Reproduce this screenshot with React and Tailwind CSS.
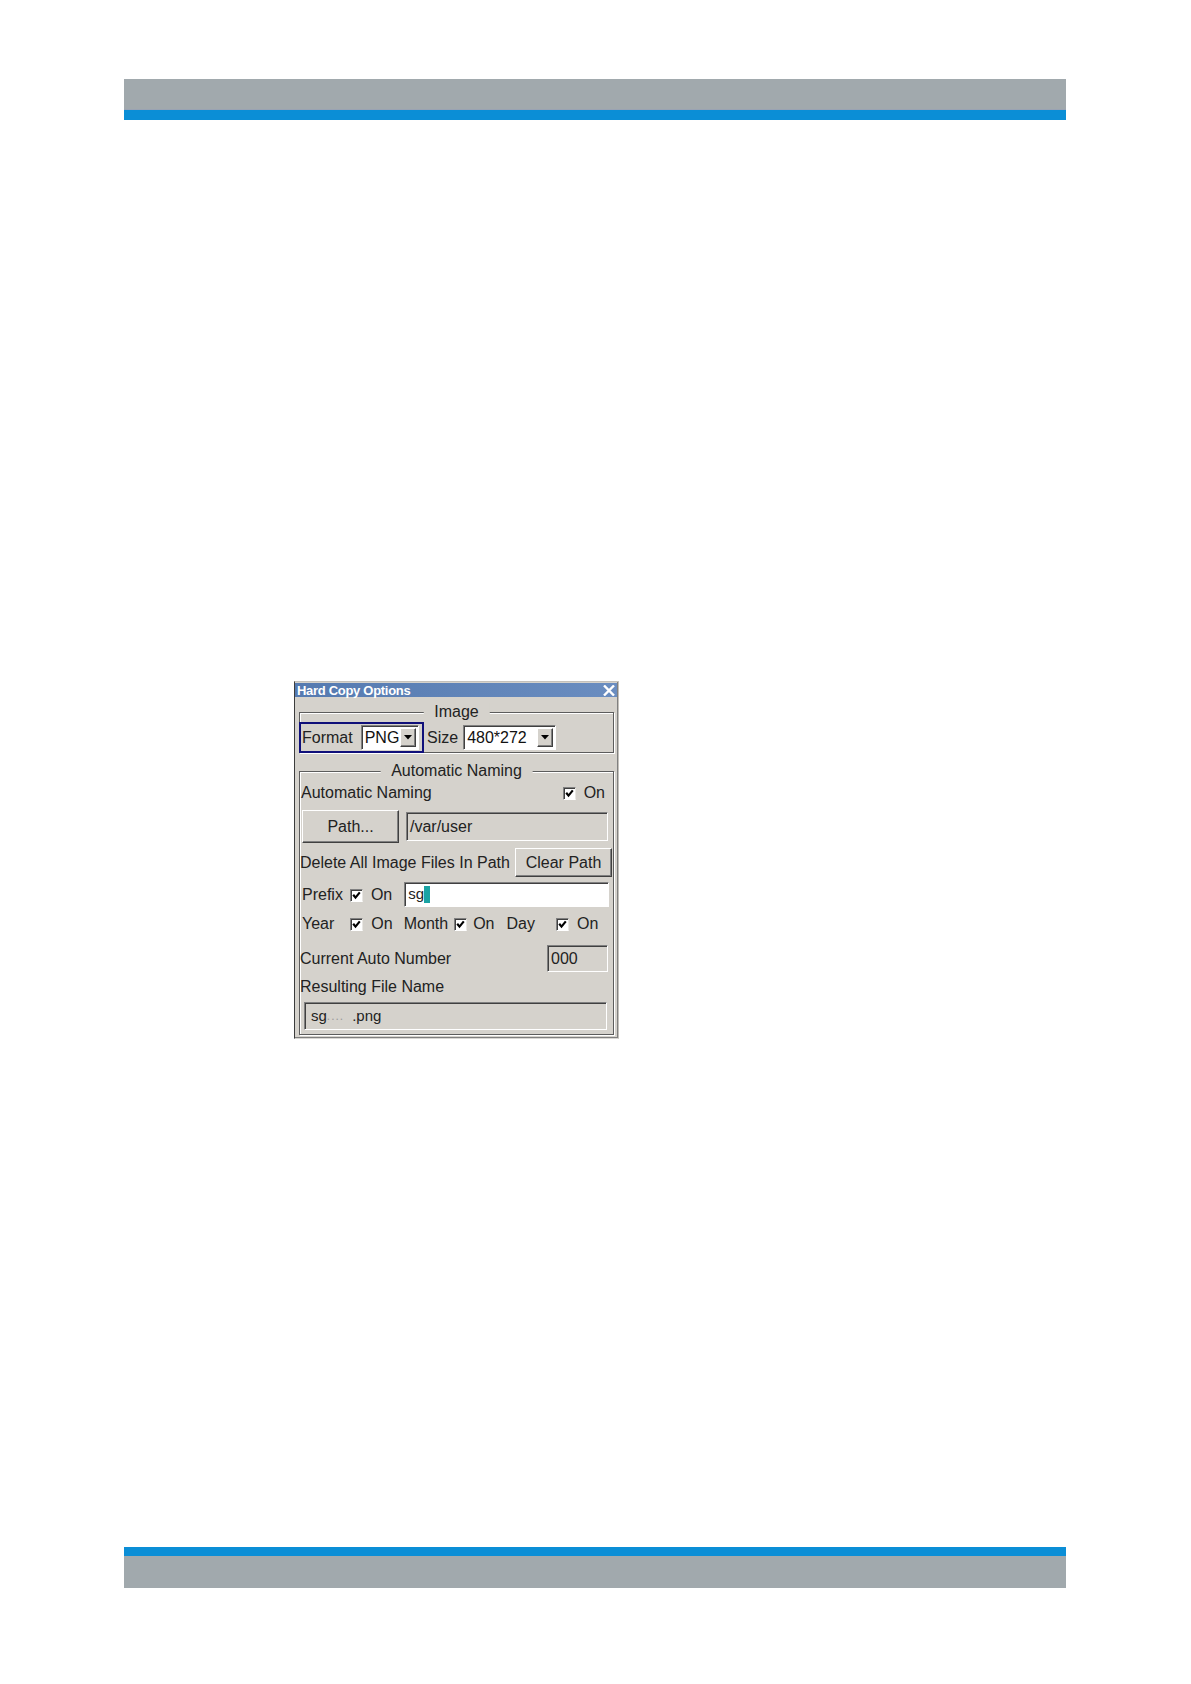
import React from "react";

const font = { fontFamily: '"Liberation Sans", Arial, sans-serif' };

function Checkbox() {
  return (
    <span className="inline-flex items-center justify-center w-[13px] h-[13px] bg-white border border-t-[#808080] border-l-[#808080] border-b-white border-r-[#e8e6e2] shadow-[inset_1px_1px_0_#404040]">
      <svg width="9" height="9" viewBox="0 0 9 9">
        <polyline points="1.2,3.8 3.5,6.6 7.8,1.4" fill="none" stroke="#000" strokeWidth="2.2" />
      </svg>
    </span>
  );
}

function Combo({ value, width }) {
  return (
    <div
      className={`flex items-center h-[25px] ${width} bg-white border border-t-[#808080] border-l-[#808080] border-b-white border-r-white shadow-[inset_1px_1px_0_#404040]`}
    >
      <span className="flex-1 pl-[3px] text-[16px] leading-none text-[#111]">{value}</span>
      <span className="flex items-center justify-center w-[16px] h-[19px] mr-[2px] bg-[#d5d2cc] border border-t-white border-l-white border-b-[#404040] border-r-[#404040] shadow-[inset_-1px_-1px_0_#808080]">
        <svg width="8" height="5" viewBox="0 0 8 5">
          <polygon points="0,0 8,0 4,4.5" fill="#000" />
        </svg>
      </span>
    </div>
  );
}

function Button({ children, width, height }) {
  return (
    <button
      className={`${width} ${height} flex items-center justify-center text-[16px] text-[#222] bg-[#d5d2cc] border border-t-white border-l-white border-b-[#404040] border-r-[#404040] shadow-[inset_-1px_-1px_0_#808080]`}
    >
      {children}
    </button>
  );
}

function Field({ children, width, height, white }) {
  return (
    <div
      className={`${width} ${height} flex items-center pl-[3px] ${white ? "bg-white" : "bg-[#d5d2cc]"} border border-t-[#808080] border-l-[#808080] border-b-white border-r-white shadow-[inset_1px_1px_0_#404040] text-[16px] text-[#222]`}
    >
      {children}
    </div>
  );
}

function Group({ label, className, children }) {
  return (
    <div
      className={`relative border border-[#5c5c5c] shadow-[inset_1px_1px_0_#fff,1px_1px_0_#fff] ${className}`}
    >
      <span className="absolute left-1/2 -translate-x-1/2 -top-[10px] px-[11px] bg-[#d5d2cc] text-[16px] leading-[18px] text-[#222] whitespace-nowrap">
        {label}
      </span>
      {children}
    </div>
  );
}

export default function App() {
  return (
    <div className="w-[1191px] min-h-[1684px] bg-white pt-[79px]" style={font}>
      {/* header band */}
      <div className="ml-[124px] w-[942px]">
        <div className="h-[31px] bg-[#a1a9ad] border-b border-[#9aa3b3]" />
        <div className="h-[10px] bg-[#0b8ed6]" />
      </div>

      {/* dialog */}
      <div className="ml-[294px] mt-[561px] w-[325px] h-[358px] bg-[#d5d2cc] border border-t-[#c4c1bb] border-r-[#c4c1bb] border-b-[#d8d6d2] border-l-[#3c3c3c] shadow-[inset_-1px_-1px_0_#808080]">
        <div className="mr-px mt-px h-[14px] flex items-center justify-between bg-gradient-to-r from-[#557ab0] to-[#6a8dc0] px-[2px]">
          <span className="text-[13px] font-bold text-white leading-none tracking-[-0.3px]">Hard Copy Options</span>
          <svg width="12" height="11" viewBox="0 0 12 11">
            <path d="M1 0.5 L11 10.5 M11 0.5 L1 10.5" stroke="#fff" strokeWidth="2.4" />
          </svg>
        </div>

        <div className="pl-[4px] pr-[4px] text-[16px] text-[#222]">
          {/* Image group */}
          <Group label="Image" className="mt-[15px] h-[41px]">
            <div className="flex items-center mt-[9px] -ml-px">
              <div className="flex items-center w-[125px] h-[31px] border-2 border-[#10107a]">
                <span className="pl-[1px]">Format</span>
                <div className="ml-[8px]">
                  <Combo value="PNG" width="w-[58px]" />
                </div>
              </div>
              <span className="ml-[3px]">Size</span>
              <div className="ml-[5px]">
                <Combo value="480*272" width="w-[93px]" />
              </div>
            </div>
          </Group>

          {/* Automatic Naming group */}
          <Group label="Automatic Naming" className="mt-[18px] h-[264px]">
            <div className="flex items-center justify-between h-[26px] mt-[8px] pl-[1px] pr-[8px]">
              <span>Automatic Naming</span>
              <span className="flex items-center gap-[8px]">
                <Checkbox />
                <span>On</span>
              </span>
            </div>

            <div className="flex items-center mt-[4px] pl-[2px]">
              <Button width="w-[97px]" height="h-[33px]">Path...</Button>
              <div className="ml-[7px]">
                <Field width="w-[202px]" height="h-[29px]">/var/user</Field>
              </div>
            </div>

            <div className="flex items-center justify-between mt-[5px] h-[29px] pr-[1px]">
              <span>Delete All Image Files In Path</span>
              <Button width="w-[97px]" height="h-[29px]">Clear Path</Button>
            </div>

            <div className="flex items-center mt-[5px] h-[25px] pl-[2px]">
              <span>Prefix</span>
              <span className="ml-[7px]"><Checkbox /></span>
              <span className="ml-[8px]">On</span>
              <div className="ml-[12px]">
                <Field width="w-[205px]" height="h-[25px]" white>
                  <span className="text-[15px]">sg</span>
                  <span className="w-[6px] h-[17px] bg-[#1aa3a3]" />
                </Field>
              </div>
            </div>

            <div className="flex items-center mt-[7px] h-[20px] pl-[2px]">
              <span>Year</span>
              <span className="ml-[16px]"><Checkbox /></span>
              <span className="ml-[8px]">On</span>
              <span className="ml-[11px]">Month</span>
              <span className="ml-[6px]"><Checkbox /></span>
              <span className="ml-[6px]">On</span>
              <span className="ml-[12px]">Day</span>
              <span className="ml-[21px]"><Checkbox /></span>
              <span className="ml-[8px]">On</span>
            </div>

            <div className="flex items-center justify-between mt-[11px] h-[27px] pr-[5px]">
              <span>Current Auto Number</span>
              <Field width="w-[61px]" height="h-[27px]">000</Field>
            </div>

            <div className="flex items-center mt-[5px] h-[20px]">
              <span>Resulting File Name</span>
            </div>

            <div className="mt-[5px] pl-[4px]">
              <Field width="w-[303px]" height="h-[28px]">
                <span className="pl-[3px] text-[15px]">sg</span>
                <span className="text-[12px] text-[#9a9a9a] tracking-[1px]">....</span>
                <span className="ml-[8px] text-[15px]">.png</span>
              </Field>
            </div>
          </Group>
        </div>
      </div>

      {/* footer band */}
      <div className="ml-[124px] w-[942px] mt-[508px]">
        <div className="h-[9px] bg-[#0b8ed6]" />
        <div className="h-[32px] bg-[#a1a9ad]" />
      </div>
    </div>
  );
}
